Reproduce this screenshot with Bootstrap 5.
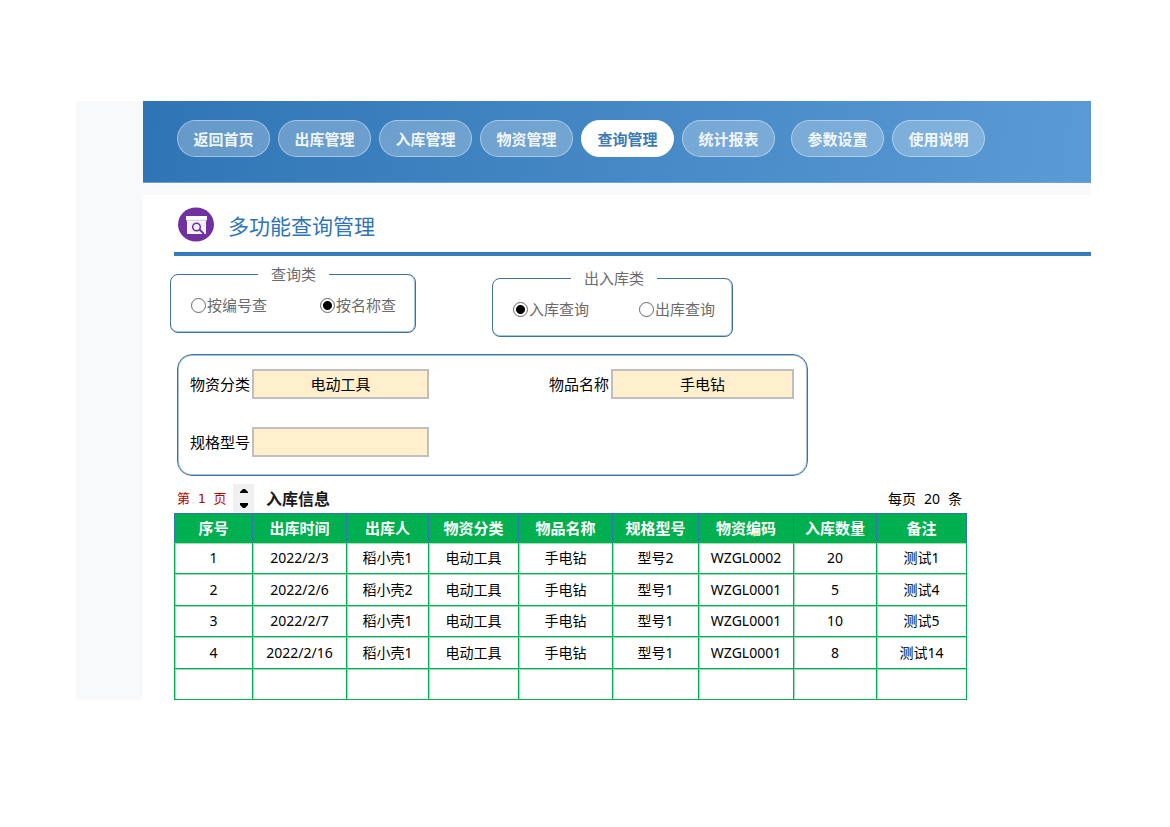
<!DOCTYPE html>
<html lang="zh-CN">
<head>
<meta charset="utf-8">
<meta name="viewport" content="width=device-width, initial-scale=1">
<title>多功能查询管理</title>
<link href="https://cdn.jsdelivr.net/npm/bootstrap@5.3.0/dist/css/bootstrap.min.css" rel="stylesheet">
<style>
  body { font-family: "Noto Sans", "Noto Sans CJK SC", sans-serif; font-size: 15px; line-height: 20px; color: #000; background: #fff; }
  .page-shell { padding: 101px 79px 127px 76px; }
  .side-strip { flex: 0 0 67px; background: #f8f9fb; }
  .top-nav { padding: 19px 34px 25px; background: linear-gradient(100deg, #2f75b5, #5b9bd5); border-bottom: 1px solid #6fa3d3; }
  .pill { width: 93px; padding: 7px 0; line-height: 21px; font-size: 15px; font-weight: 700; text-align: center; text-decoration: none; color: rgba(255,255,255,.92); background: rgba(255,255,255,.26); border: 1px solid rgba(255,255,255,.4); border-radius: 19px; font-family: "Noto Sans CJK SC", sans-serif; }
  .pill.active { color: #3a7ab8; background: #fff; border-color: #fff; }
  .pale-gap { height: 12px; background: #f8f9fb; }
  .content-area { padding-left: 31px; }
  .title-bar { height: 57px; padding: 2px 0 0 4px; gap: 13px; }
  .title-bar h1 { font-size: 21px; line-height: 28px; font-weight: 400; color: #2f75b5; font-family: "Noto Sans CJK SC", sans-serif; }
  .title-rule { height: 4px; background: #3a7cbc; border-top: 1px solid #2f75b5; }
  .choice-row { gap: 76px; margin-left: -4px; padding-top: 8px; }
  .choice-box { width: 246px; height: 69px; padding: 0 19px 0 20px; margin: 0; min-width: 0; border: 1px solid #41719c; border-radius: 8px; box-shadow: inset 0 -1px #a9c3dc, inset -1px 0 #a9c3dc; }
  .choice-box.narrow { width: 241px; margin-top: 4px; padding: 0 17px 0 20px; }
  .choice-box legend { float: none; width: auto; margin: 0 auto; padding: 0 13px; font-size: 15px; line-height: 20px; color: #6b6b6b; }
  .choice-box label { display: flex; align-items: center; gap: 1px; color: #6b6b6b; padding-top: 11px; white-space: nowrap; }
  .choice-box input { appearance: none; width: 15px; height: 15px; margin: 0; border: 1px solid #666; border-radius: 50%; background: #fff; }
  .choice-box input:checked { background: radial-gradient(circle, #000 4px, #fff 5px); }
  .filter-box { max-width: 631px; margin: 17px 0 0 3px; padding: 14px 13px 18px 12px; border: 1px solid #41719c; border-radius: 15px; box-shadow: inset 0 0 0 1px #a9c3dc; }
  .filter-grid { display: grid; grid-template-columns: 239px 245px; justify-content: space-between; row-gap: 28px; }
  .field-line { display: flex; align-items: center; gap: 2px; }
  .field-line label { width: 60px; white-space: nowrap; }
  .field-line input { flex: 1; min-width: 0; height: 30px; padding: 0 0 2px; border: 2px solid #bfbfbf; border-radius: 0; background: #ffefcc; color: #000; text-align: center; font: inherit; }
  .records-wrap { max-width: 792px; }
  .pager-row { margin-top: 8px; height: 29px; }
  .page-no { width: 56px; padding: 5px 0 0 3px; margin-right: 3px; color: #c00000; font-family: "DejaVu Sans Mono", "Noto Sans CJK SC", monospace; font-size: 13px; white-space: nowrap; }
  .spin-box { width: 21px; height: 28px; background: #f0f0f0; }
  .spin-box button { display: flex; align-items: center; justify-content: center; width: 21px; height: 14px; padding: 0; border: 0; background: none; }
  .list-title { margin: 3px 0 0 12px; font-size: 16px; line-height: 24px; font-weight: 700; color: #1a1a1a; }
  .per-page { gap: 8px; padding: 5px 4px 0 0; font-size: 14px; }
  .records { width: 100%; table-layout: fixed; border-collapse: collapse; text-align: center; }
  .records th { height: 29px; padding: 0; color: #fff; background: #00b050; border: 1px solid #2f75b5; border-bottom-color: #00b050; font-size: 15px; font-weight: 700; text-align: center; }
  .records td { height: 31px; padding: 0; border: 1px solid #00b050; font-size: 14px; white-space: nowrap; box-shadow: inset 1px 1px #9fdfba; }
  .records tbody tr:nth-child(2) td, .records tbody tr:nth-child(4) td { height: 32px; }
</style>
</head>
<body>
<div class="page-shell">
  <div class="d-flex">
    <aside class="side-strip"></aside>
    <div class="flex-grow-1">
      <nav class="top-nav d-flex flex-wrap gap-2">
        <a class="pill" href="#">返回首页</a>
        <a class="pill" href="#">出库管理</a>
        <a class="pill" href="#">入库管理</a>
        <a class="pill" href="#">物资管理</a>
        <a class="pill active" aria-current="page" href="#">查询管理</a>
        <a class="pill me-2" href="#">统计报表</a>
        <a class="pill" href="#">参数设置</a>
        <a class="pill" href="#">使用说明</a>
      </nav>
      <div class="pale-gap"></div>
      <main class="content-area">
        <div class="title-bar d-flex align-items-center">
          <svg width="37" height="36" viewBox="0 0 37 36" aria-hidden="true">
            <ellipse cx="18" cy="17.500" rx="18" ry="17" fill="#7030a0"/>
            <path d="M8 9h21v4.500H8z" fill="#fff"/>
            <path d="M8 13.200h21" stroke="#c9b0da" stroke-width=".6"/>
            <path d="M9.500 14h18v12.500h-18z" fill="#f4eef8" stroke="#fff"/>
            <circle cx="18.500" cy="20" r="3.800" fill="none" stroke="#7030a0" stroke-width="1.500"/>
            <path d="M21.500 22.500l4.500 4.500" stroke="#7030a0" stroke-width="1.800"/>
          </svg>
          <h1 class="mb-0">多功能查询管理</h1>
        </div>
        <div class="title-rule"></div>

        <form>
          <div class="choice-row d-flex flex-wrap align-items-start">
            <fieldset class="choice-box">
              <legend>查询类</legend>
              <div class="d-flex justify-content-between">
                <label><input type="radio" name="by">按编号查</label>
                <label><input type="radio" name="by" checked>按名称查</label>
              </div>
            </fieldset>
            <fieldset class="choice-box narrow">
              <legend>出入库类</legend>
              <div class="d-flex justify-content-between">
                <label><input type="radio" name="dir" checked>入库查询</label>
                <label><input type="radio" name="dir">出库查询</label>
              </div>
            </fieldset>
          </div>

          <div class="filter-box">
            <div class="filter-grid">
              <div class="field-line"><label for="kind">物资分类</label><input id="kind" type="text" value="电动工具"></div>
              <div class="field-line"><label for="item">物品名称</label><input id="item" type="text" value="手电钻"></div>
              <div class="field-line"><label for="spec">规格型号</label><input id="spec" type="text"></div>
            </div>
          </div>
        </form>

        <div class="records-wrap">
          <div class="pager-row d-flex align-items-start">
            <span class="page-no">第 1 页</span>
            <div class="spin-box">
              <button type="button" aria-label="上一页"><svg width="8" height="4" viewBox="0 0 8 4"><path d="M0 4V3l3-3h2l3 3v1z"/></svg></button>
              <button type="button" aria-label="下一页"><svg width="8" height="5" viewBox="0 0 8 5"><path d="M0 0h8v2L5 5H3L0 2z"/></svg></button>
            </div>
            <h2 class="list-title">入库信息</h2>
            <div class="per-page d-flex ms-auto"><span>每页</span><span>20</span><span>条</span></div>
          </div>
          <table class="records">
            <colgroup>
              <col style="width:78px"><col style="width:94px"><col style="width:82px"><col style="width:90px"><col style="width:94px"><col style="width:86px"><col style="width:95px"><col style="width:83px"><col style="width:90px">
            </colgroup>
            <thead>
              <tr><th>序号</th><th>出库时间</th><th>出库人</th><th>物资分类</th><th>物品名称</th><th>规格型号</th><th>物资编码</th><th>入库数量</th><th>备注</th></tr>
            </thead>
            <tbody>
              <tr><td>1</td><td>2022/2/3</td><td>稻小壳1</td><td>电动工具</td><td>手电钻</td><td>型号2</td><td>WZGL0002</td><td>20</td><td>测试1</td></tr>
              <tr><td>2</td><td>2022/2/6</td><td>稻小壳2</td><td>电动工具</td><td>手电钻</td><td>型号1</td><td>WZGL0001</td><td>5</td><td>测试4</td></tr>
              <tr><td>3</td><td>2022/2/7</td><td>稻小壳1</td><td>电动工具</td><td>手电钻</td><td>型号1</td><td>WZGL0001</td><td>10</td><td>测试5</td></tr>
              <tr><td>4</td><td>2022/2/16</td><td>稻小壳1</td><td>电动工具</td><td>手电钻</td><td>型号1</td><td>WZGL0001</td><td>8</td><td>测试14</td></tr>
              <tr><td></td><td></td><td></td><td></td><td></td><td></td><td></td><td></td><td></td></tr>
            </tbody>
          </table>
        </div>
      </main>
    </div>
  </div>
</div>
<script src="https://cdn.jsdelivr.net/npm/bootstrap@5.3.0/dist/js/bootstrap.bundle.min.js"></script>
</body>
</html>
